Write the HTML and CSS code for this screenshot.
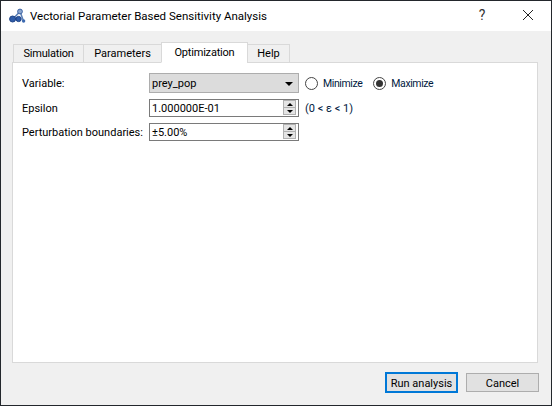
FILE: index.html
```html
<!DOCTYPE html>
<html lang="en">
<head>
<meta charset="utf-8">
<title>Vectorial Parameter Based Sensitivity Analysis</title>
<link rel="stylesheet" href="styles.css">
</head>
<body>
<div class="window">
  <header class="titlebar">
    <svg class="app-icon" width="17" height="16" viewBox="0 0 17 16">
      <path d="M4 11 L11 3.5 L14.5 13 M4 11 H10" fill="none" stroke="#5a7fb5" stroke-width="1.5"/>
      <circle cx="11" cy="3.5" r="2.4" fill="#8ba6cf" stroke="#3d63a3"/>
      <circle cx="3.6" cy="11" r="3" fill="#2f5ca8" stroke="#1f4488"/>
      <circle cx="9.6" cy="11" r="2.6" fill="#2f5ca8" stroke="#1f4488"/>
      <circle cx="14.6" cy="13" r="1.7" fill="#3d6ab0"/>
    </svg>
    <span class="title">Vectorial Parameter Based Sensitivity Analysis</span>
    <span class="help-btn">?</span>
    <svg class="close-btn" width="12" height="12" viewBox="0 0 12 12">
      <path d="M1 1 L11 11 M11 1 L1 11" stroke="#222" stroke-width="1" fill="none"/>
    </svg>
  </header>
  <main class="content">
    <nav class="tabs">
      <div class="tab tab-sim">Simulation</div>
      <div class="tab tab-par">Parameters</div>
      <div class="tab tab-opt">Optimization</div>
      <div class="tab tab-help">Help</div>
    </nav>
    <section class="pane">
      <div class="form">
        <label class="label label-var">Variable:</label>
        <div class="combo"><span>prey_pop</span><i class="combo-arrow"></i></div>
        <div class="radios">
          <span class="radio"></span><span class="radio-text">Minimize</span>
          <span class="radio radio-on"></span><span class="radio-text">Maximize</span>
        </div>
        <label class="label">Epsilon</label>
        <div class="spin">
          <span class="spin-value">1.000000E-01</span>
          <span class="spin-btns"><b class="up"></b><b class="down"></b></span>
        </div>
        <div class="hint">(0 &lt; ε &lt; 1)</div>
        <label class="label">Perturbation boundaries:</label>
        <div class="spin">
          <span class="spin-value">±5.00%</span>
          <span class="spin-btns"><b class="up"></b><b class="down"></b></span>
        </div>
      </div>
    </section>
    <footer class="actions">
      <button class="btn btn-default">Run analysis</button>
      <button class="btn btn-cancel">Cancel</button>
    </footer>
  </main>
</div>
</body>
</html>
```
FILE: styles.css
```css
* { box-sizing: border-box; }
html, body { margin: 0; padding: 0; }
body {
  width: 552px;
  height: 406px;
  overflow: hidden;
  font-family: Roboto, "Open Sans", sans-serif;
  font-size: 11px;
  color: #000;
}
.window {
  width: 552px;
  height: 406px;
  border: 1px solid #23272c;
  display: flex;
  flex-direction: column;
  background: #f0f0f0;
}
.titlebar {
  height: 30px;
  flex: none;
  background: #fff;
  display: flex;
  align-items: center;
  padding-left: 8px;
}
.app-icon { flex: none; margin-top: -1px; }
.title { margin-left: 4px; font-size: 11.5px; color: #000; flex: 1; white-space: nowrap; }
.help-btn { font-size: 14px; width: 14px; text-align: center; color: #333; margin-right: 33px; margin-top: -2px; }
.close-btn { margin-right: 17px; margin-top: -2px; flex: none; }

.content {
  flex: 1;
  display: flex;
  flex-direction: column;
  padding: 11px 13px 12px 11px;
  min-height: 0;
}
.tabs {
  display: flex;
  height: 21px;
  flex: none;
  align-items: flex-end;
  padding-left: 1px;
  position: relative;
  z-index: 1;
  margin-bottom: -1px;
}
.tab {
  height: 19px;
  background: #f0f0f0;
  border: 1px solid #d9d9d9;
  margin-left: -1px;
  padding-top: 1px;
  text-align: center;
  white-space: nowrap;
  line-height: 16px;
}
.tab-sim { width: 71px; margin-left: 0; letter-spacing: -0.2px; }
.tab-par { width: 79px; }
.tab-opt {
  width: 87px;
  height: 21px;
  background: #fff;
  border-bottom-color: #fff;
  padding-top: 2px;
  letter-spacing: -0.2px;
}
.tab-help { width: 43px; }
.pane {
  flex: 1;
  background: #fff;
  border: 1px solid #d9d9d9;
  padding: 10px 0 0 9px;
  min-height: 0;
}
.form {
  display: grid;
  grid-template-columns: 127px 150px auto;
  grid-template-rows: 20px 18px 18px;
  row-gap: 6px;
  align-items: center;
}
.label { white-space: nowrap; padding-top: 1px; }
.combo {
  height: 20px;
  background: #dcdcdc;
  border: 1px solid #adadad;
  display: flex;
  align-items: center;
  padding-left: 2px;
  padding-top: 1px;
  justify-content: space-between;
  padding-right: 5px;
}
.combo-arrow {
  width: 0;
  height: 0;
  border-left: 4px solid transparent;
  border-right: 4px solid transparent;
  border-top: 4px solid #000;
}
.radios { display: flex; align-items: center; padding-left: 6px; }
.radio {
  width: 13px;
  height: 13px;
  border-radius: 50%;
  border: 1px solid #444;
  background: #fff;
  flex: none;
  display: flex;
  align-items: center;
  justify-content: center;
}
.radio-on::after {
  content: "";
  width: 7px;
  height: 7px;
  border-radius: 50%;
  background: #333;
}
.radio-text {
  margin-left: 5px;
  margin-right: 11px;
  padding-top: 1px;
  font-size: 10.5px;
  letter-spacing: -0.4px;
  color: #001a40;
  white-space: nowrap;
}
.spin {
  height: 18px;
  background: #fff;
  border: 1px solid #7a7a7a;
  display: flex;
  align-items: center;
  justify-content: space-between;
  padding-left: 2px;
}
.spin-value { padding-top: 1px; }
.spin-btns {
  width: 16px;
  height: 16px;
  display: flex;
  flex-direction: column;
  padding: 0 2px 1px 1px;
}
.spin-btns b {
  flex: 1;
  background: #e4e4e4;
  border: 1px solid #b0b0b0;
  display: flex;
  align-items: center;
  justify-content: center;
}
.spin-btns b + b { margin-top: -1px; }
.up::after, .down::after {
  content: "";
  width: 0;
  height: 0;
  border-left: 3px solid transparent;
  border-right: 3px solid transparent;
}
.up::after { border-bottom: 3px solid #000; }
.down::after { border-top: 3px solid #000; }
.hint { padding-left: 6px; padding-top: 1px; color: #001a40; white-space: nowrap; }

.actions {
  flex: none;
  height: 30px;
  display: flex;
  justify-content: flex-end;
  align-items: center;
  gap: 7px;
  padding-top: 9px;
  margin-right: -1px;
}
.btn {
  width: 73px;
  height: 21px;
  background: #e1e1e1;
  border: 1px solid #adadad;
  font: inherit;
  color: #000;
  padding: 1px 0 0;
}
.btn-default { border: 2px solid #0078d7; margin-right: 1px; }
.btn-cancel { height: 19px; }
```
